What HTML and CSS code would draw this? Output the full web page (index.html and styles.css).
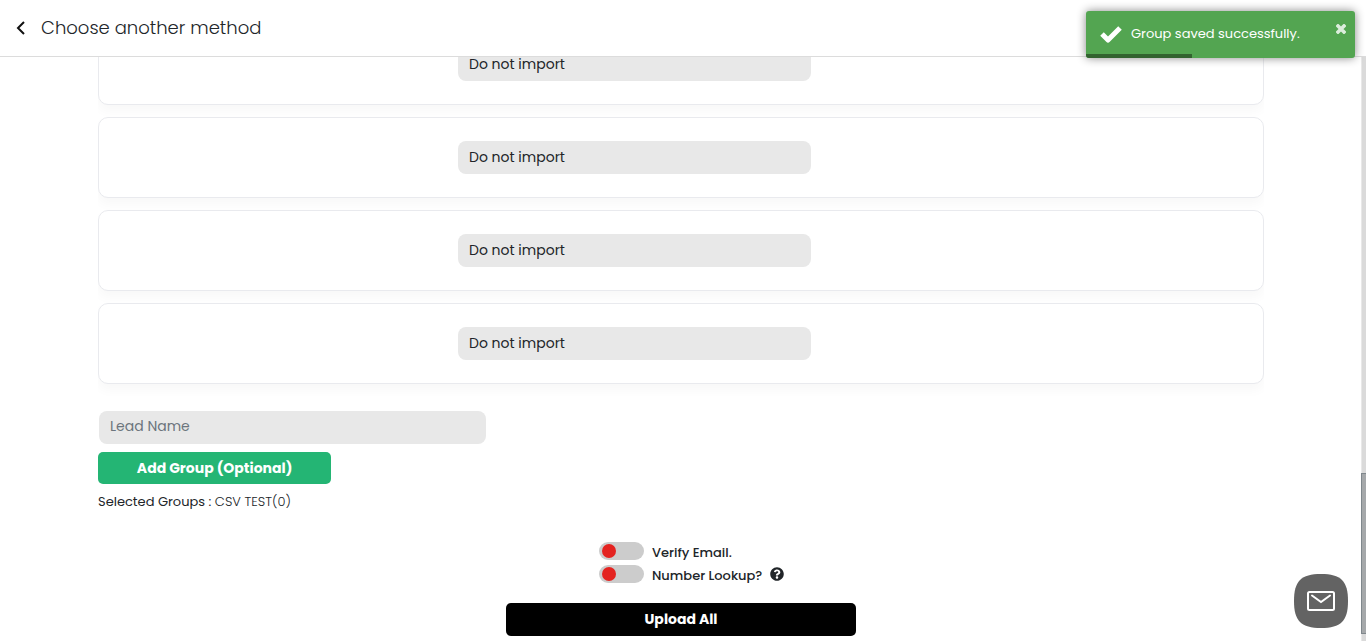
FILE: index.html
```
<!DOCTYPE html>
<html lang="en">
<head>
    <meta charset="UTF-8">
    <meta name="viewport" content="width=device-width, initial-scale=1.0">
    <title>Import leads</title>
    <link rel="stylesheet" href="styles.css">
</head>
<body>
    <header class="topbar">
        <a href="#" class="back">
            <svg width="10" height="14" viewBox="0 0 10 14"><path d="M8 1 L2 7 L8 13" fill="none" stroke="#111" stroke-width="2"/></svg>
            <span>Choose another method</span>
        </a>
    </header>

    <div class="page">
        <main class="content">
            <div class="row"><div class="card">
                <select class="field" aria-label="Column 1"><option>Do not import</option></select>
            </div></div>
            <div class="row"><div class="card">
                <select class="field" aria-label="Column 2"><option>Do not import</option></select>
            </div></div>
            <div class="row"><div class="card">
                <select class="field" aria-label="Column 3"><option>Do not import</option></select>
            </div></div>
            <div class="row"><div class="card">
                <select class="field" aria-label="Column 4"><option>Do not import</option></select>
            </div></div>

            <form class="lead-form">
                <input type="text" class="field lead-name" placeholder="Lead Name" aria-label="Lead Name">
                <button type="button" class="button add-group">Add Group (Optional)</button>
                <p class="groups"><span class="groups-label">Selected Groups :</span> CSV TEST(0)</p>

                <div class="options">
                    <div class="option">
                        <input type="checkbox" class="toggle" id="verify">
                        <label for="verify">Verify Email.</label>
                    </div>
                    <div class="option">
                        <input type="checkbox" class="toggle" id="lookup">
                        <label for="lookup">Number Lookup?</label>
                        <svg class="help" width="14" height="14" viewBox="0 0 512 512"><path fill="#212529" d="M504 256c0 137-111 248-248 248S8 393 8 256 119 8 256 8s248 111 248 248zM262.700 90c-54.500 0-89.300 23-116.500 63.800-3.500 5.300-2.400 12.400 2.700 16.300l34.700 26.300c5.200 3.900 12.600 3 16.700-2.100 17.900-22.700 30.100-35.800 57.300-35.800 20.400 0 45.700 13.100 45.700 33 0 15-12.400 22.700-32.500 34C247.100 238.500 216 254.900 216 296v4c0 6.600 5.400 12 12 12h56c6.600 0 12-5.400 12-12v-1.300c0-28.500 83.200-29.600 83.200-106.700 0-58-60.200-102-116.500-102zM256 338c-25.400 0-46 20.600-46 46s20.600 46 46 46 46-20.600 46-46-20.600-46-46-46z"/></svg>
                    </div>
                </div>

                <button type="button" class="button upload">Upload All</button>
            </form>
        </main>
        <div class="scrollbar"><div class="thumb"></div></div>
    </div>

    <div class="toast" role="status">
        <svg class="toast-icon" width="24" height="20" viewBox="0 0 24 20"><path d="M3 10 L9 16 L21 4" fill="none" stroke="#fff" stroke-width="5" stroke-linejoin="round"/></svg>
        <span class="toast-text">Group saved successfully.</span>
        <button type="button" class="toast-close" aria-label="Close">
            <svg width="10" height="10" viewBox="0 0 10 10"><path d="M2 2 L8 8 M8 2 L2 8" stroke="#dceddc" stroke-width="3.600" stroke-linecap="square"/></svg>
        </button>
        <div class="toast-progress"></div>
    </div>

    <button type="button" class="chat" aria-label="Messages">
        <svg width="54" height="54" viewBox="0 0 54 54">
            <path d="M27 0 C47 0 54 7 54 27 C54 47 47 54 27 54 C7 54 0 47 0 27 C0 7 7 0 27 0 Z" fill="#636363"/>
            <rect x="14" y="18" width="26" height="18" rx="1.500" fill="none" stroke="#fff" stroke-width="2"/>
            <path d="M18 21.500 L27 28 L36 21.500" fill="none" stroke="#fff" stroke-width="2" stroke-linecap="round"/>
        </svg>
    </button>
</body>
</html>
```

FILE: styles.css
```
* { box-sizing: border-box; }
body {
    display: flex;
    flex-direction: column;
    height: 100vh;
    margin: 0;
    overflow: hidden;
    font-family: Poppins, Inter, sans-serif;
    font-size: 13px;
    color: #212529;
    background-color: #fff;
}
button, input, select { font-family: inherit; }
button { cursor: pointer; }

/* TOP BAR */
.topbar { flex: none; display: flex; align-items: center; height: 57px; padding: 0 16px; border-bottom: 1px solid #dcdcdc; }
.back { display: flex; align-items: center; gap: 15px; font-size: 18px; font-weight: 300; line-height: 24px; color: #212529; text-decoration: none; }

/* PAGE, scrolled to the end */
.page { flex: 1; display: flex; min-height: 0; }
.content { flex: 1; display: flex; flex-direction: column; justify-content: flex-end; padding: 0 97px 5px 98px; overflow: hidden; }
.scrollbar { position: relative; width: 5px; border-left: 1px solid #e8e8e8; background-color: #dadada; }
.thumb { position: absolute; right: 0; bottom: 7px; width: 5px; height: 161px; background-color: #a5a8aa; border: 1px solid #7f878c; border-right: 0; }

/* COLUMN ROWS */
.row { flex: none; padding-bottom: 12px; overflow: hidden; }
.card {
    display: grid;
    grid-template-columns: 359fr 353fr 452fr;
    align-items: center;
    height: 81px;
    border: 1px solid #e9eaee;
    border-radius: 10px;
    background-color: #fff;
    box-shadow: 0 6px 12px rgba(0, 0, 0, 0.03);
}
.card .field { grid-column: 2; }
.field {
    appearance: none;
    height: 33px;
    padding: 0 11px 2px;
    border: none;
    border-radius: 8px;
    background-color: #e8e8e8;
    font-size: 14px;
    font-weight: 400;
    color: #212529;
}
.field::placeholder { color: #6c757d; opacity: 1; }

/* LEAD FORM */
.lead-form { flex: none; display: flex; flex-direction: column; align-items: flex-start; padding-top: 15px; }
.lead-name { width: calc(100% / 3 - 2px); margin: 0 1px 8px; }
.button { border: none; border-radius: 5px; font-size: 14px; font-weight: 700; color: #fff; }
.add-group { width: 20%; height: 32px; background-color: #24b574; }
.groups { margin: 8px 0 30px; font-size: 13px; font-weight: 300; line-height: 20px; }
.groups-label { font-weight: 400; }
.upload { align-self: center; width: 30%; height: 33px; background-color: #000; }

.options { align-self: center; display: flex; flex-direction: column; gap: 5px; width: 164px; margin: 0 0 20px; }
.option { display: flex; align-items: center; height: 18px; gap: 8px; font-weight: 500; white-space: nowrap; }
.option label { padding-top: 3px; }
.help { flex: none; }
.toggle { appearance: none; position: relative; flex: none; width: 45px; height: 18px; margin: 0; border-radius: 9px; background-color: #ccc; }
.toggle::before { content: ""; position: absolute; left: 3px; top: 2px; width: 14px; height: 14px; border-radius: 50%; background-color: #e42320; }
.toggle:checked::before { left: 28px; }

/* TOAST */
.toast {
    position: absolute;
    top: 11px;
    right: 11px;
    display: flex;
    align-items: center;
    width: 269px;
    height: 47px;
    padding: 0 13px 2px;
    gap: 8px;
    border-radius: 3px;
    background-color: #53a551;
    color: #fff;
    font-weight: 400;
    box-shadow: 0 0 10px #888;
    overflow: hidden;
}
.toast-close { position: absolute; top: 13px; right: 9px; display: flex; padding: 0; border: none; background: none; }
.toast-progress { position: absolute; left: 0; bottom: 0; width: 106px; height: 4px; background-color: #32632f; }

/* CHAT BUTTON */
.chat { position: absolute; right: 18px; bottom: 13px; display: flex; padding: 0; border: none; background: none; }
```
